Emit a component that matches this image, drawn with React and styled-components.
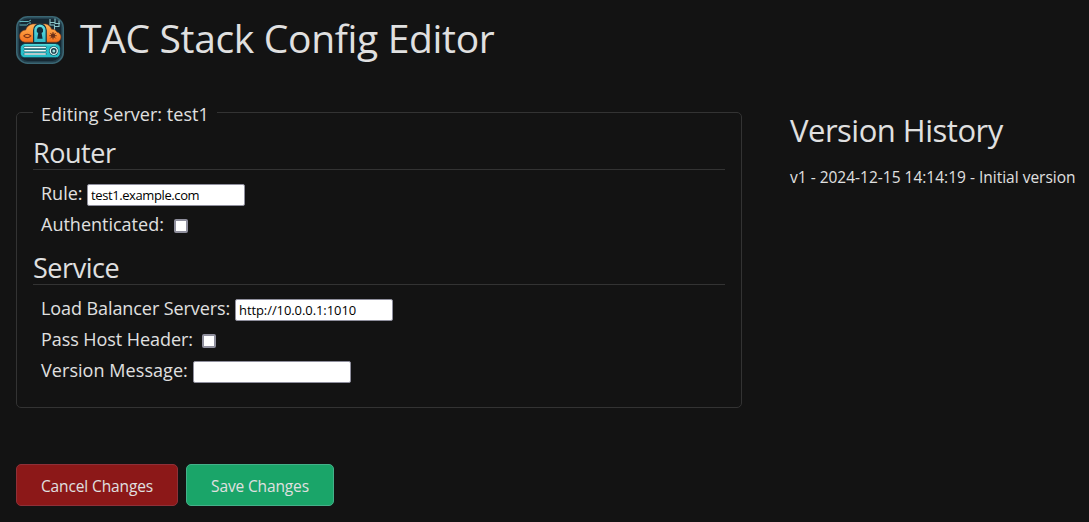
import React from "react";
import styled, { createGlobalStyle } from "styled-components";

const GlobalStyle = createGlobalStyle`
  *, *::before, *::after { box-sizing: border-box; }
  body {
    margin: 0;
    min-height: 522px;
    background: #131313;
    color: #e0e0e0;
    font-family: "Segoe UI", "Open Sans", "Noto Sans", sans-serif;
    overflow: hidden;
  }
`;

const Page = styled.div`
  padding: 16px 0 0 16px;
  width: 1089px;
`;

const Header = styled.header`
  display: flex;
  align-items: center;
  gap: 16px;
  height: 48px;
`;

const Title = styled.h1`
  margin: 0;
  font-size: 39px;
  font-weight: 400;
  line-height: 48px;
  padding-bottom: 4px;
  letter-spacing: -0.33px;
  white-space: nowrap;
`;

const Content = styled.main`
  display: flex;
  align-items: flex-start;
  gap: 48px;
  margin-top: 40px;
`;

const Editor = styled.fieldset`
  width: 726px;
  height: 304px;
  margin: 0;
  padding: 0 16px;
  border: 1px solid #333;
  border-radius: 5px;
`;

const Legend = styled.legend`
  height: 17px;
  padding: 0 8px;
  font-size: 18px;
  line-height: 21px;
  letter-spacing: 0.04px;
  white-space: nowrap;
`;

const Section = styled.section`
  margin-top: ${(p) => p.$top}px;
`;

const SectionTitle = styled.h2`
  height: 34px;
  margin: 0 0 10px;
  border-bottom: 1px solid #333;
  font-size: 27px;
  font-weight: 400;
  line-height: 34px;
  letter-spacing: -0.45px;
`;

const Field = styled.label`
  display: flex;
  height: 31px;
  padding-left: 8px;
  font-size: 18px;
  line-height: 27px;
`;

const FieldName = styled.span`
  width: ${(p) => p.$width}px;
  letter-spacing: ${(p) => p.$tracking || 0}px;
  white-space: nowrap;
`;

const TextInput = styled.input`
  width: 158px;
  height: 22px;
  margin: 4px 0 0;
  padding: 0 3px;
  border: 1px solid #8f8f9d;
  border-radius: 2px;
  background: #fff;
  color: #000;
  font-family: "Segoe UI", "Open Sans", "Noto Sans", sans-serif;
  font-size: 13px;
  letter-spacing: ${(p) => p.$tracking || 0}px;
`;

const Checkbox = styled.input.attrs({ type: "checkbox" })`
  appearance: none;
  width: 14px;
  height: 14px;
  margin: 8px 0 0;
  border: 2px solid #8f8f9d;
  border-radius: 2px;
  background: #fff;
`;

const History = styled.aside`
  padding-top: 6px;
  white-space: nowrap;
`;

const HistoryTitle = styled.h2`
  margin: 0;
  font-size: 31px;
  font-weight: 400;
  line-height: 40px;
  letter-spacing: -0.5px;
`;

const HistoryEntry = styled.p`
  margin: 15px 0 0;
  font-size: 15.5px;
  line-height: 24px;
`;

const Actions = styled.footer`
  display: flex;
  gap: 8px;
  margin-top: 56px;
`;

const Button = styled.button`
  width: ${(p) => p.$width}px;
  height: 42px;
  padding: 2px 0 0;
  border: 1px solid ${(p) => p.$border};
  border-radius: 5px;
  background: ${(p) => p.$fill};
  color: #e0e0e0;
  font-family: inherit;
  font-size: 15.5px;
  letter-spacing: -0.13px;
  white-space: nowrap;
`;

const Logo = () => (
  <svg width="48" height="48" viewBox="0 0 48 48" fill="none">
    <defs>
      <linearGradient id="cloud" x1="0" y1="0" x2="0" y2="1">
        <stop offset="0" stopColor="#ffb65a" />
        <stop offset="0.5" stopColor="#fb9338" />
        <stop offset="1" stopColor="#f4701f" />
      </linearGradient>
      <linearGradient id="teal" x1="0" y1="0" x2="0" y2="1">
        <stop offset="0" stopColor="#62e0e4" />
        <stop offset="1" stopColor="#2fb9c6" />
      </linearGradient>
    </defs>
    <rect x="0.75" y="0.75" width="46.5" height="46.5" rx="11" fill="#233f4c" stroke="#3a6673" strokeWidth="1.5" />
    <rect x="3" y="3" width="42" height="42" rx="9" fill="#162832" />
    <path d="M3.500 5.500h9l2.500-1.500M3.500 9h7l2-1.500M13 7h2" stroke="#63b4b8" strokeWidth="1" />
    <path d="M34 3v6h4.500v5M39 2.500v5h5M34 6.500h5M43 4.500v6h-4.500" stroke="#8cc5c8" strokeWidth="1.100" />
    <g transform="translate(0.3 0.7)">
      <path d="M8.500 25.500C5 25 3.300 22.500 3.300 19.500c0-3.500 2.500-6 6.200-6.300C10.500 9.500 14 7 18.500 7.300h11c3 .7 5 2.700 5.800 5.200 2.500-.2 4.500 1 5.200 2.800 2.800.7 4.200 2.700 4.200 5 0 3-2 4.900-4.700 5.200z" fill="url(#cloud)" stroke="#8a3b17" strokeWidth="0.600" />
      <path d="M17.300 26V13.500a6.300 6.300 0 0 1 12.600 0V26z" fill="url(#teal)" stroke="#153543" strokeWidth="1.200" />
      <path d="M23.600 10.300a3.300 3.300 0 0 0-1.700 6.100l-1 5.600h5.400l-1-5.600a3.300 3.300 0 0 0-1.700-6.100z" fill="#102c3b" />
      <path d="M7.500 19.200c2-2.300 5-2.300 7 0-2 2.300-5 2.300-7 0z" stroke="#813616" strokeWidth="1.100" />
      <path d="M36.700 15.300v7.400M33 19h7.400M34 16.300l5.400 5.400M39.400 16.300L34 21.700" stroke="#6b3018" strokeWidth="0.900" />
      <circle cx="36.700" cy="19" r="2.100" fill="#6b3018" />
      <rect x="4" y="27" width="40" height="14" rx="4.500" fill="#27bfc9" stroke="#103240" strokeWidth="0.800" />
      <path d="M8 28.100h31.500" stroke="#6be9e7" strokeWidth="1" />
      <path d="M8.500 30.800H29M8.500 34H29M8.500 37.200H29" stroke="#173b4b" strokeWidth="2.300" strokeLinecap="round" />
      <path d="M8.500 30.800H29M8.500 34H29M8.500 37.200H29" stroke="#eafbf8" strokeWidth="1.500" strokeLinecap="round" />
      <circle cx="37.500" cy="34.200" r="4.700" fill="#163848" />
      <circle cx="37.500" cy="34.200" r="3.500" fill="#163848" stroke="#d8f4f1" strokeWidth="1.400" />
      <circle cx="37.500" cy="34.200" r="1.500" fill="#9fdedd" />
    </g>
  </svg>
);

export default function App() {
  return (
    <Page>
      <GlobalStyle />
      <Header>
        <Logo />
        <Title>TAC Stack Config Editor</Title>
      </Header>
      <Content>
        <Editor>
          <Legend>Editing Server: test1</Legend>
          <Section $top={15}>
            <SectionTitle>Router</SectionTitle>
            <Field>
              <FieldName $width={46}>Rule:</FieldName>
              <TextInput $tracking={-0.4} defaultValue="test1.example.com" />
            </Field>
            <Field>
              <FieldName $width={133}>Authenticated:</FieldName>
              <Checkbox />
            </Field>
          </Section>
          <Section $top={9}>
            <SectionTitle>Service</SectionTitle>
            <Field>
              <FieldName $width={194} $tracking={-0.08}>Load Balancer Servers:</FieldName>
              <TextInput $tracking={-0.08} defaultValue="http://10.0.0.1:1010" />
            </Field>
            <Field>
              <FieldName $width={161} $tracking={-0.06}>Pass Host Header:</FieldName>
              <Checkbox />
            </Field>
            <Field>
              <FieldName $width={152} $tracking={0.06}>Version Message:</FieldName>
              <TextInput />
            </Field>
          </Section>
        </Editor>
        <History>
          <HistoryTitle>Version History</HistoryTitle>
          <HistoryEntry>v1 - 2024-12-15 14:14:19 - Initial version</HistoryEntry>
        </History>
      </Content>
      <Actions>
        <Button $width={162} $fill="#8c1818" $border="#8f3038">Cancel Changes</Button>
        <Button $width={148} $fill="#1aa569" $border="#45b08a">Save Changes</Button>
      </Actions>
    </Page>
  );
}
